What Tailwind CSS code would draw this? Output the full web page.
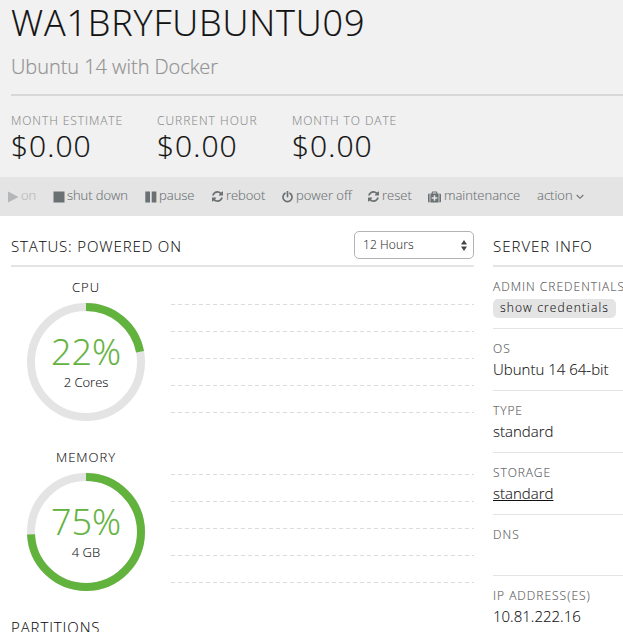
<!DOCTYPE html>
<html lang="en">
<head>
<meta charset="utf-8">
<title>WA1BRYFUBUNTU09</title>
<script src="https://cdn.jsdelivr.net/npm/@tailwindcss/browser@4"></script>
</head>
<body class="w-[623px] h-[632px] overflow-hidden bg-white font-['Open_Sans',sans-serif] font-light text-[#111] [-webkit-text-stroke:0.1px]">
<header class="h-[177px] bg-[#f1f1f1] pl-[11px] pt-px whitespace-nowrap">
  <h1 class="h-11 leading-[44px] text-[36px] tracking-[0.86px] [-webkit-text-stroke:0.2px]">WA1BRYFUBUNTU09</h1>
  <p class="h-[49px] leading-[44px] text-[20px] tracking-[-0.05px] text-[#939393] [-webkit-text-stroke:0.2px]">Ubuntu 14 with Docker</p>
  <div class="flex border-t-2 border-[#d8d8d8] pt-[16px]">
    <div class="w-[146px]"><div class="h-[18px] leading-[18px] text-[12px] tracking-[0.92px] text-[#8c8c8c]">MONTH ESTIMATE</div><div class="h-8 leading-8 text-[30px] tracking-[1px] [-webkit-text-stroke:0.2px]">$0.00</div></div>
    <div class="w-[135px]"><div class="h-[18px] leading-[18px] text-[12px] tracking-[1px] text-[#8c8c8c]">CURRENT HOUR</div><div class="h-8 leading-8 text-[30px] tracking-[1px] [-webkit-text-stroke:0.2px]">$0.00</div></div>
    <div><div class="h-[18px] leading-[18px] text-[12px] tracking-[0.9px] text-[#8c8c8c]">MONTH TO DATE</div><div class="h-8 leading-8 text-[30px] tracking-[1px] [-webkit-text-stroke:0.2px]">$0.00</div></div>
  </div>
</header>
<nav class="flex items-center h-[39px] pb-[2px] bg-[#e4e4e4] text-[13px] text-[#6b7073] whitespace-nowrap">
  <div class="flex items-center w-[45px] ml-2 text-[#b4b6b7] shrink-0"><svg class="w-[11px] h-[12px] mr-[2px] mt-[2px]" viewBox="0 0 11 12"><path d="M0 0.5L10.5 6L0 11.5Z" fill="currentColor"/></svg>on</div>
  <div class="flex items-center w-[92px] shrink-0 tracking-[-0.08px]"><svg class="w-[12px] h-[12px] mr-[2px] mt-[2px]" viewBox="0 0 12 12"><path d="M0.5 0.5H11.5V11.5H0.5Z" fill="currentColor"/></svg>shut down</div>
  <div class="flex items-center w-[67px] shrink-0"><svg class="w-[12px] h-[12px] mr-[2px] mt-[2px]" viewBox="0 0 12 12"><path d="M0.3 0.5H5V11.5H0.3ZM6.7 0.5H11.4V11.5H6.7Z" fill="currentColor"/></svg>pause</div>
  <div class="flex items-center w-[70px] shrink-0 tracking-[-0.05px]"><svg class="w-[11px] h-[11px] mr-[3px] mt-[2px]" viewBox="0 0 1536 1536"><path fill="currentColor" d="M1511 928q0 5-1 7-64 268-268 434.500T764 1536q-146 0-282.500-55T238 1324l-129 129q-19 19-45 19t-45-19-19-45V960q0-26 19-45t45-19h448q26 0 45 19t19 45-19 45l-137 137q71 66 161 102t187 36q134 0 250-65t186-179q11-17 53-117 8-23 30-23h192q13 0 22.500 9.500t9.500 22.500zm25-800v448q0 26-19 45t-45 19h-448q-26 0-45-19t-19-45 19-45l138-138Q969 256 768 256q-134 0-250 65T332 500q-11 17-53 117-8 23-30 23H50q-13 0-22.500-9.500T18 608v-7q65-268 270-434.500T768 0q146 0 284 55.500T1297 212l130-129q19-19 45-19t45 19 19 45z"/></svg>reboot</div>
  <div class="flex items-center w-[86px] shrink-0"><svg class="w-[11px] h-[12px] mr-[3px] mt-[2px]" viewBox="0 0 11 12"><path d="M3.1 2.3A4.5 4.5 0 1 0 7.9 2.3M5.5 0.6V5.6" fill="none" stroke="currentColor" stroke-width="1.7" stroke-linecap="round"/></svg>power off</div>
  <div class="flex items-center w-[61px] shrink-0"><svg class="w-[11px] h-[11px] mr-[3px] mt-[2px]" viewBox="0 0 1536 1536"><path fill="currentColor" d="M1511 928q0 5-1 7-64 268-268 434.500T764 1536q-146 0-282.500-55T238 1324l-129 129q-19 19-45 19t-45-19-19-45V960q0-26 19-45t45-19h448q26 0 45 19t19 45-19 45l-137 137q71 66 161 102t187 36q134 0 250-65t186-179q11-17 53-117 8-23 30-23h192q13 0 22.500 9.500t9.500 22.500zm25-800v448q0 26-19 45t-45 19h-448q-26 0-45-19t-19-45 19-45l138-138Q969 256 768 256q-134 0-250 65T332 500q-11 17-53 117-8 23-30 23H50q-13 0-22.500-9.500T18 608v-7q65-268 270-434.500T768 0q146 0 284 55.500T1297 212l130-129q19-19 45-19t45 19 19 45z"/></svg>reset</div>
  <div class="flex items-center w-[108px] shrink-0"><svg class="w-[13px] h-[12px] mr-[3px] mt-[2px] -ml-px" viewBox="0 0 13 12"><path fill="currentColor" fill-rule="evenodd" d="M0 3.800Q0 2.500 1.300 2.500H1.600V11.500H1.300Q0 11.500 0 10.200ZM13 3.800Q13 2.500 11.700 2.500H11.400V11.500H11.700Q13 11.500 13 10.200ZM2.400 2.500H3.700V1.200Q3.700 .4 4.500 .4H8.500Q9.300 .4 9.300 1.200V2.500H10.600V11.500H2.400ZM4.800 1.500V2.500H8.200V1.500ZM5.700 4.200V6.200H3.700V7.800H5.700V9.800H7.300V7.800H9.300V6.200H7.300V4.200Z"/></svg>maintenance</div>
  <div class="flex items-center shrink-0">action<svg class="w-2 h-[6px] ml-[3px] mt-[3px]" viewBox="0 0 8 6"><path d="M0.700 1L4 4.300L7.300 1" fill="none" stroke="currentColor" stroke-width="1.100"/></svg></div>
</nav>
<main class="flex h-[416px] pl-[11px] whitespace-nowrap">
  <section class="w-[463px] mr-[19px] shrink-0">
    <div class="flex justify-between h-[51px] border-b-2 border-[#e4e4e4]">
      <h2 class="mt-5 leading-5 text-[15px] tracking-[0.87px]">STATUS: POWERED ON</h2>
      <div class="flex items-center justify-between mt-[15px] w-[120px] h-[28px] border border-[#b3b3b3] rounded-[5px] pl-2 pr-[6px] text-[12px] text-[#333]"><span class="tracking-[0.1px]">12 Hours</span><svg class="w-[6px] h-[11px]" viewBox="0 0 6 11"><path d="M0 4.500L3 0L6 4.500ZM0 6.500H6L3 11Z" fill="#444"/></svg></div>
    </div>
    <div class="flex h-[170px]">
      <div class="w-[150px] mr-[10px] flex flex-col items-center pt-[10px]">
        <div class="h-[26px] leading-5 text-[13px] tracking-[1px]">CPU</div>
        <div class="relative w-[118px] h-[118px] text-center">
          <svg class="absolute inset-0 w-full h-full" viewBox="0 0 118 118"><circle cx="59" cy="59" r="55" fill="none" stroke="#e4e4e4" stroke-width="8"/><circle cx="59" cy="59" r="55" fill="none" stroke="#62b23e" stroke-width="8" pathLength="100" stroke-dasharray="22 78" transform="rotate(-90 59 59)"/></svg>
          <div class="relative pt-[29px]"><div class="h-[39px] leading-10 text-[36px] text-[#62b23e] [-webkit-text-stroke:0.2px]">22%</div><div class="h-[22px] leading-[22px] text-[13px]">2 Cores</div></div>
        </div>
      </div>
      <svg class="w-[303px] h-[110px] mt-[37px]" viewBox="0 0 303 110"><path d="M0 .5H303M0 27.500H303M0 54.500H303M0 81.500H303M0 108.500H303" stroke="#dcdcdc" stroke-dasharray="4 3"/></svg>
    </div>
    <div class="flex h-[170px]">
      <div class="w-[150px] mr-[10px] flex flex-col items-center pt-[10px]">
        <div class="h-[26px] leading-5 text-[13px] tracking-[1px]">MEMORY</div>
        <div class="relative w-[118px] h-[118px] text-center">
          <svg class="absolute inset-0 w-full h-full" viewBox="0 0 118 118"><circle cx="59" cy="59" r="55" fill="none" stroke="#e4e4e4" stroke-width="8"/><circle cx="59" cy="59" r="55" fill="none" stroke="#62b23e" stroke-width="8" pathLength="100" stroke-dasharray="74.300 25.700" transform="rotate(-90 59 59)"/></svg>
          <div class="relative pt-[29px]"><div class="h-[39px] leading-10 text-[36px] text-[#62b23e] [-webkit-text-stroke:0.2px]">75%</div><div class="h-[22px] leading-[22px] text-[13px]">4 GB</div></div>
        </div>
      </div>
      <svg class="w-[303px] h-[110px] mt-[37px]" viewBox="0 0 303 110"><path d="M0 .5H303M0 27.500H303M0 54.500H303M0 81.500H303M0 108.500H303" stroke="#dcdcdc" stroke-dasharray="4 3"/></svg>
    </div>
    <h2 class="pt-[10px] leading-5 text-[15px] tracking-[0.9px]">PARTITIONS</h2>
  </section>
  <aside class="flex-1 min-w-0">
    <h2 class="h-[51px] pt-5 leading-5 border-b-2 border-[#e4e4e4] text-[15px] tracking-[1px]">SERVER INFO</h2>
    <div class="h-[62px] pt-[10px] border-b border-[#e4e4e4]"><div class="leading-5 text-[12px] tracking-[1px] text-[#555]">ADMIN CREDENTIALS</div><div class="mt-[2px] w-[123px] h-[19px] leading-[17px] rounded-[5px] bg-[#e4e4e4] text-center text-[12px] tracking-[1.15px]">show credentials</div></div>
    <div class="h-[62px] pt-[10px] border-b border-[#e4e4e4]"><div class="leading-5 text-[12px] tracking-[1px] text-[#555]">OS</div><div class="leading-5 text-[15px]">Ubuntu 14 64-bit</div></div>
    <div class="h-[62px] pt-[10px] border-b border-[#e4e4e4]"><div class="leading-5 text-[12px] tracking-[0.9px] text-[#555]">TYPE</div><div class="leading-5 text-[15px]">standard</div></div>
    <div class="h-[62px] pt-[10px] border-b border-[#e4e4e4]"><div class="leading-5 text-[12px] tracking-[0.9px] text-[#555]">STORAGE</div><div class="leading-5 text-[15px] underline">standard</div></div>
    <div class="h-[61px] pt-[10px] border-b border-[#e4e4e4]"><div class="leading-5 text-[12px] tracking-[1px] text-[#555]">DNS</div></div>
    <div class="pt-[10px]"><div class="leading-5 text-[12px] tracking-[1px] text-[#555]">IP ADDRESS(ES)</div><div class="leading-5 text-[15px]">10.81.222.16</div></div>
  </aside>
</main>
</body>
</html>
